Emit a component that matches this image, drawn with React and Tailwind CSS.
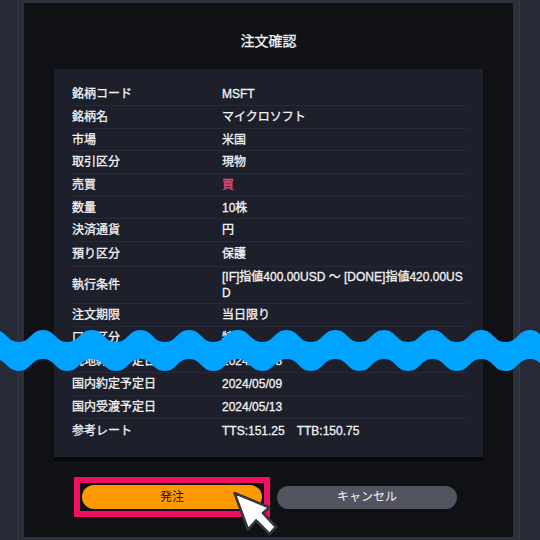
import React from 'react';

const rows = [
  ['銘柄コード', 'MSFT', 'h-[22.6px]'],
  ['銘柄名', 'マイクロソフト', 'h-[23px]'],
  ['市場', '米国', 'h-[22.5px]'],
  ['取引区分', '現物', 'h-[22.8px]'],
  ['売買', '買', 'h-[22.7px]'],
  ['数量', '10株', 'h-[22.3px]'],
  ['決済通貨', '円', 'h-[22.7px]'],
  ['預り区分', '保護', 'h-[24.7px]'],
  ['執行条件', '[IF]指値400.00USD ～ [DONE]指値420.00USD', 'h-[37.6px]'],
  ['注文期限', '当日限り', 'h-[22.4px]'],
  ['口座区分', '特定', 'h-[23.3px]'],
  ['現地約定予定日', '2024/05/08', 'h-[23.3px]'],
  ['国内約定予定日', '2024/05/09', 'h-[22.7px]'],
  ['国内受渡予定日', '2024/05/13', 'h-[23.3px]'],
  ['参考レート', 'TTS:151.25　TTB:150.75', 'h-[22.7px]'],
];

function Row({ label, value, height, last }) {
  return (
    <div className={`flex items-center ${height} ${last ? '' : 'border-b border-[#272a36]'}`}>
      <div className="w-[153px] shrink-0 pl-[3px]">{label}</div>
      <div className={`flex-1 break-all leading-[16px] ${label === '売買' ? 'text-[#f0457f]' : ''}`}>{value}</div>
    </div>
  );
}

function Wave() {
  const period = 48.7;
  const start = -78.75;
  const count = 14;
  let d = `M${start} 342`;
  for (let i = 0; i < count; i++) {
    const x = start + i * period;
    d += ` C${x + period * 0.25} 342 ${x + period * 0.25} 330 ${x + period * 0.5} 330 S${x + period * 0.75} 342 ${x + period} 342`;
  }
  d += ' V371';
  for (let i = count; i > 0; i--) {
    const x = start + i * period;
    d += ` C${x - period * 0.25} 371 ${x - period * 0.25} 359 ${x - period * 0.5} 359 S${x - period * 0.75} 371 ${x - period} 371`;
  }
  d += 'Z';
  return (
    <svg className="absolute left-0 top-0" width="540" height="540" viewBox="0 0 540 540">
      <path d={d} fill="#00a3ff" />
    </svg>
  );
}

function Cursor() {
  return (
    <svg className="absolute left-[225px] top-[480px]" width="60" height="60" viewBox="0 0 60 60">
      <path d="M9.5 13 L44.5 27.5 L38 33 L51 47 L44.5 54 L31 40.5 L23 49.5 Z" fill="#fff" stroke="#33363f" strokeWidth="2.6" strokeLinejoin="round" />
    </svg>
  );
}

export default function App() {
  return (
    <div className="relative w-[540px] h-[540px] overflow-hidden bg-[#262a35] font-['Liberation_Sans','Noto_Sans_CJK_JP',sans-serif] text-[12px] font-normal text-[#f2f3f5] [-webkit-text-stroke:0.3px_currentColor]">
      <div className="absolute left-[17px] right-[20px] top-0 bottom-0 border-x border-[#343843] px-[6px] py-[3px] bg-[#2c303b]">
        <div className="h-full bg-[#101115] flex flex-col items-center">
          <h1 className="mt-[28px] h-[20px] leading-[20px] text-[14px] text-center font-normal">注文確認</h1>
          <div className="mt-[18px] w-[429px] h-[388px] shrink-0 bg-[#1d1f2a] px-[15px] pt-[14.4px] shadow-[0_4px_0_#08090b]">
            {rows.map((r, i) => (
              <Row key={r[0]} label={r[0]} value={r[1]} height={r[2]} last={i === rows.length - 1} />
            ))}
          </div>
          <div className="mt-[20px] w-[429px] flex items-center gap-[7px] pl-[20px] [-webkit-text-stroke:0]">
            <div className="w-[196px] h-[40px] border-[6px] border-[#f0105f] p-[2px]">
              <div className="h-full rounded-full bg-[#ff9900] text-[#1a1a1a] flex items-center justify-center">発注</div>
            </div>
            <div className="w-[180px] h-[23px] rounded-full bg-[#52545f] flex items-center justify-center">キャンセル</div>
          </div>
        </div>
      </div>
      <Wave />
      <Cursor />
    </div>
  );
}
